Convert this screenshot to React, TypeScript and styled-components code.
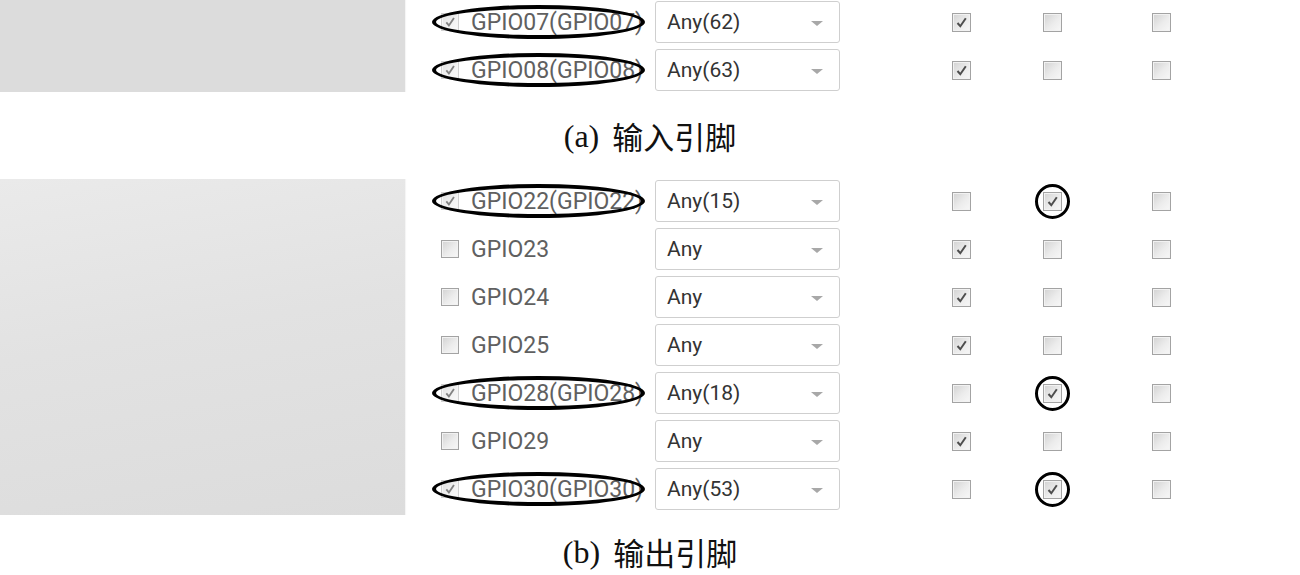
import { createGlobalStyle, styled } from "styled-components";

interface PinRow {
  name: string;
  value: string;
  checks: [boolean, boolean, boolean];
  marked?: boolean;
}

const inputPins: PinRow[] = [
  { name: "GPIO07(GPIO07)", value: "Any(62)", checks: [true, false, false], marked: true },
  { name: "GPIO08(GPIO08)", value: "Any(63)", checks: [true, false, false], marked: true },
];

const outputPins: PinRow[] = [
  { name: "GPIO22(GPIO22)", value: "Any(15)", checks: [false, true, false], marked: true },
  { name: "GPIO23", value: "Any", checks: [true, false, false] },
  { name: "GPIO24", value: "Any", checks: [true, false, false] },
  { name: "GPIO25", value: "Any", checks: [true, false, false] },
  { name: "GPIO28(GPIO28)", value: "Any(18)", checks: [false, true, false], marked: true },
  { name: "GPIO29", value: "Any", checks: [true, false, false] },
  { name: "GPIO30(GPIO30)", value: "Any(53)", checks: [false, true, false], marked: true },
];

const GlobalStyle = createGlobalStyle`
  body {
    margin: 0;
    background: #fff;
  }
`;

const Page = styled.div`
  width: 1300px;
  height: 575px;
  overflow: hidden;
`;

const Figure = styled.div<{ $height: number }>`
  display: flex;
  height: ${(p) => p.$height}px;
  overflow: hidden;
`;

const Panel = styled.div<{ $fade?: boolean }>`
  flex: none;
  width: 405px;
  background: ${(p) =>
    p.$fade ? "linear-gradient(170deg, #eaeaea 0%, #e2e2e2 45%, #dcdcdc 100%)" : "#dcdcdc"};
  box-shadow: 1px 0 1px rgba(0, 0, 0, 0.04);
`;

const Rows = styled.div`
  display: flex;
  flex-direction: column;
`;

const Row = styled.div`
  position: relative;
  display: flex;
  align-items: center;
  flex: none;
  height: 48px;
  padding-bottom: 4px;
  box-sizing: border-box;
`;

const Label = styled.div`
  display: flex;
  align-items: center;
  gap: 12px;
  width: 214px;
  margin-left: 36px;
  font-family: Roboto, "Liberation Sans", sans-serif;
  font-size: 23px;
  color: #606060;
  white-space: nowrap;
`;

const Select = styled.div`
  position: relative;
  display: flex;
  align-items: center;
  width: 185px;
  height: 42px;
  box-sizing: border-box;
  padding-left: 11px;
  border: 1px solid #cfcfcf;
  border-radius: 3px;
  background: #fff;
  font-family: Roboto, "Liberation Sans", sans-serif;
  font-size: 21px;
  color: #333;

  &::after {
    content: "";
    position: absolute;
    right: 16px;
    top: 19px;
    border-left: 6px solid transparent;
    border-right: 6px solid transparent;
    border-top: 5px solid #a8a8a8;
  }
`;

const CheckGroup = styled.div`
  display: grid;
  grid-template-columns: 79px 103px 114px;
  justify-items: center;
  align-items: center;
  margin-left: 82px;
`;

const CheckCell = styled.div`
  position: relative;
  display: flex;
  align-items: center;
  justify-content: center;
`;

const Box = styled.div<{ $size: number; $faint?: boolean }>`
  display: flex;
  align-items: center;
  justify-content: center;
  width: ${(p) => p.$size}px;
  height: ${(p) => p.$size}px;
  box-sizing: border-box;
  border: 1px solid ${(p) => (p.$faint ? "#bdbdbd" : "#a3a3a3")};
  background: linear-gradient(135deg, #d2d2d2 0%, #ececec 55%, #f7f7f7 100%);
  box-shadow: inset 0 0 0 1px #f2f2f2;
  opacity: ${(p) => (p.$faint ? 0.7 : 1)};
`;

const Ellipse = styled.div`
  position: absolute;
  left: 27px;
  top: 5px;
  width: 213px;
  height: 34px;
  box-sizing: border-box;
  border: 4px solid #000;
  border-radius: 50%;
  pointer-events: none;
`;

const Ring = styled.div`
  position: absolute;
  left: 50%;
  top: 50%;
  width: 35px;
  height: 35px;
  box-sizing: border-box;
  margin: -17.5px 0 0 -17.5px;
  border: 3.5px solid #000;
  border-radius: 50%;
`;

const Caption = styled.div<{ $height: number; $top: number }>`
  display: flex;
  justify-content: center;
  align-items: flex-start;
  height: ${(p) => p.$height}px;
  padding-top: ${(p) => p.$top}px;
  box-sizing: border-box;
  font-family: "Liberation Serif", "Noto Sans CJK SC", serif;
  font-size: 32px;
  line-height: 32px;
  color: #111;
`;

const CaptionText = styled.span`
  margin-left: 13px;
  font-family: "Noto Sans CJK SC", sans-serif;
  font-size: 31px;
  line-height: 32px;
`;

function Checkbox({ checked, size, faint }: { checked: boolean; size: number; faint?: boolean }) {
  return (
    <Box $size={size} $faint={faint}>
      {checked && (
        <svg width={size - 6} height={size - 6} viewBox="0 0 13 13">
          <path d="M2.5 7 L5.3 10.2 L10.8 2.2" fill="none" stroke="#4e4e4e" strokeWidth="2" />
        </svg>
      )}
    </Box>
  );
}

function Pin({ row }: { row: PinRow }) {
  return (
    <Row>
      <Label>
        <Checkbox checked={!!row.marked} size={18} faint={row.marked} />
        {row.name}
      </Label>
      <Select>{row.value}</Select>
      <CheckGroup>
        {row.checks.map((c, i) => (
          <CheckCell key={i}>
            <Checkbox checked={c} size={19} />
            {row.marked && i === 1 && c && <Ring />}
          </CheckCell>
        ))}
      </CheckGroup>
      {row.marked && <Ellipse />}
    </Row>
  );
}

export default function App() {
  return (
    <Page>
      <GlobalStyle />
      <Figure $height={92}>
        <Panel />
        <Rows>
          {inputPins.map((r) => (
            <Pin key={r.name} row={r} />
          ))}
        </Rows>
      </Figure>
      <Caption $height={87} $top={28}>
        (a)<CaptionText>输入引脚</CaptionText>
      </Caption>
      <Figure $height={336}>
        <Panel $fade />
        <Rows>
          {outputPins.map((r) => (
            <Pin key={r.name} row={r} />
          ))}
        </Rows>
      </Figure>
      <Caption $height={60} $top={21}>
        (b)<CaptionText>输出引脚</CaptionText>
      </Caption>
    </Page>
  );
}
